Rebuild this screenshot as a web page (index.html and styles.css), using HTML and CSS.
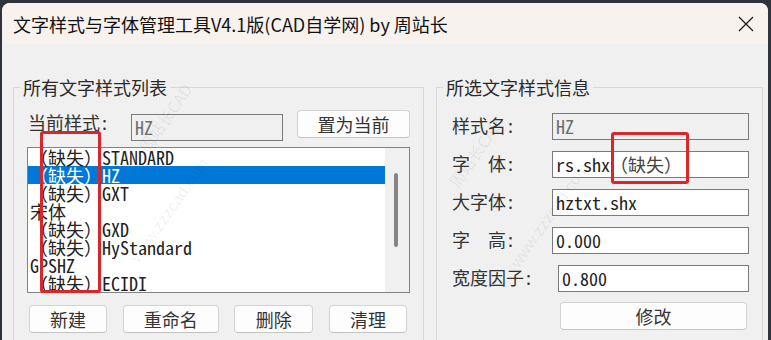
FILE: index.html
```html
<!DOCTYPE html>
<html lang="zh-CN">
<head>
    <meta charset="UTF-8">
    <title>文字样式与字体管理工具</title>
    <link rel="stylesheet" href="styles.css">
</head>
<body>
    <div class="window">
        <div class="titlebar">
            <span class="title">文字样式与字体管理工具V4.1版(CAD自学网) by 周站长</span>
            <svg class="close" width="16" height="16" viewBox="0 0 16 16">
                <path d="M1 1 L15 15 M15 1 L1 15" stroke="#1a1a1a" stroke-width="1.3" fill="none"/>
            </svg>
        </div>

        <div class="content">
            <fieldset class="group group-list">
                <legend>所有文字样式列表</legend>
                <div class="cur-row">
                    <span class="label lbl-cur">当前样式:</span>
                    <div class="field disabled w-cur">HZ</div>
                    <button class="btn btn-set">置为当前</button>
                </div>

                <div class="listbox">
                    <div class="items">
                        <div class="item">（缺失）STANDARD</div>
                        <div class="item selected">（缺失）HZ</div>
                        <div class="item">（缺失）GXT</div>
                        <div class="item">宋体</div>
                        <div class="item">（缺失）GXD</div>
                        <div class="item">（缺失）HyStandard</div>
                        <div class="item">GPSHZ</div>
                        <div class="item">（缺失）ECIDI</div>
                    </div>
                    <div class="scrollbar"><div class="thumb"></div></div>
                </div>

                <div class="btn-row">
                    <button class="btn w-new">新建</button>
                    <button class="btn w-rename">重命名</button>
                    <button class="btn w-del">删除</button>
                    <button class="btn w-clean">清理</button>
                </div>
            </fieldset>

            <fieldset class="group group-info">
                <legend>所选文字样式信息</legend>
                <div class="info-row">
                    <span class="label">样式名:</span>
                    <div class="field disabled">HZ</div>
                </div>
                <div class="info-row">
                    <span class="label">字　体:</span>
                    <div class="field">rs.shx<span class="missing">（缺失）</span></div>
                </div>
                <div class="info-row">
                    <span class="label">大字体:</span>
                    <div class="field">hztxt.shx</div>
                </div>
                <div class="info-row">
                    <span class="label">字　高:</span>
                    <div class="field">0.000</div>
                </div>
                <div class="info-row">
                    <span class="label wide">宽度因子:</span>
                    <div class="field">0.800</div>
                </div>
                <button class="btn btn-modify">修改</button>
            </fieldset>
        </div>

        <!-- watermark -->
        <span class="mark mark1">www.zzzcad.com</span>
        <span class="mark mark2">周站长CAD</span>
        <span class="mark mark3">www.zzzcad.com</span>
        <span class="mark mark4">周站长CAD</span>

        <!-- red annotation boxes -->
        <div class="note note-list"></div>
        <div class="note note-font"></div>
    </div>
</body>
</html>
```

FILE: styles.css
```css
body {
    margin: 0;
    background-color: #2f333c;
    font-family: "Noto Sans Mono CJK SC", "Liberation Mono", "Noto Sans CJK SC", monospace;
    font-size: 18px;
    color: #333;
    overflow: hidden;
}

.window {
    position: relative;
    margin: 3px 3px 0 2px;
    height: 337px;
    background-color: #f0f0f0;
    border-radius: 8px 8px 0 0;
    overflow: hidden;
}

.titlebar {
    height: 41px;
    background-color: #f8f2ee;
    display: flex;
    align-items: center;
    justify-content: space-between;
    padding: 0 14px 0 11px;
}

.title {
    font-family: "Noto Sans CJK SC", sans-serif;
    font-size: 18px;
    color: #111;
    line-height: 24px;
}

.close {
    display: block;
}

.content {
    display: flex;
    gap: 12px;
    padding: 0 5px 0 11px;
    margin-top: 33px;
}

.group {
    margin: 0;
    border: 1px solid #d8d8d8;
    min-width: 0;
    box-sizing: border-box;
    height: 300px;
}

.group legend {
    font-family: "Noto Sans CJK SC", sans-serif;
    font-size: 18px;
    line-height: 20px;
    color: #2a2a2a;
    padding: 0 3px;
}

.group-list {
    width: 411px;
    padding: 0 13px 0 14px;
}

.group-list legend {
    margin-left: -8px;
}

.group-info {
    flex: 1;
    padding: 0 13px 0 15px;
}

.group-info legend {
    margin-left: -9px;
}

.label {
    line-height: 20px;
    white-space: nowrap;
}

.cur-row {
    display: flex;
    align-items: flex-start;
    margin-top: 13px;
    height: 31px;
}

.lbl-cur {
    width: 103px;
    margin-top: 2px;
}

.field {
    box-sizing: border-box;
    height: 27px;
    border: 1px solid #7a7a7a;
    background-color: #fff;
    padding: 0 3px;
    line-height: 25px;
    white-space: nowrap;
    overflow: hidden;
    color: #222;
}

.field.disabled {
    background-color: #f0f0f0;
    color: #6e6e6e;
}

.w-cur {
    width: 152px;
    margin-top: 4px;
}

.btn {
    box-sizing: border-box;
    height: 28px;
    background-color: #fdfdfd;
    border: 1px solid #d3d3d3;
    border-bottom-color: #c4c4c4;
    border-radius: 4px;
    font-family: "Noto Sans CJK SC", sans-serif;
    font-size: 18px;
    color: #333;
    padding: 0;
    line-height: 24px;
}

.btn-set {
    width: 113px;
    margin-left: auto;
}

.listbox {
    display: flex;
    box-sizing: border-box;
    width: 383px;
    height: 146px;
    margin: 6px 0 0 -1px;
    border: 1px solid #828282;
    background-color: #fff;
}

.items {
    flex: 1;
}

.item {
    height: 18px;
    line-height: 18px;
    padding-left: 2px;
    white-space: nowrap;
    color: #222;
}

.item.selected {
    background-color: #0078d7;
    color: #fff;
}

.scrollbar {
    width: 24px;
    background-color: #f0f0f0;
    position: relative;
}

.thumb {
    position: absolute;
    left: 9px;
    top: 25px;
    width: 4px;
    height: 74px;
    border-radius: 2px;
    background-color: #858585;
}

.btn-row {
    display: flex;
    justify-content: space-between;
    margin-top: 12px;
    padding: 0 3px 0 1px;
}

.w-new { width: 78px; }
.w-rename { width: 96px; }
.w-del { width: 79px; }
.w-clean { width: 78px; }

.info-row {
    display: flex;
    align-items: center;
    height: 27px;
    margin-top: 11px;
}

.info-row:first-of-type {
    margin-top: 16px;
}

.info-row .label {
    width: 100px;
    margin-bottom: 4px;
}

.info-row .label.wide {
    width: 106px;
}

.info-row .field {
    flex: 1;
}

.missing {
    color: #444;
}

.btn-modify {
    display: block;
    width: 187px;
    margin: 10px 0 0 108px;
}

.mark {
    position: absolute;
    font-family: "Liberation Sans", sans-serif;
    font-size: 16px;
    color: rgba(0, 0, 0, 0.07);
    transform: rotate(-55deg);
    transform-origin: left bottom;
    white-space: nowrap;
    pointer-events: none;
}

.mark1 { left: 140px; top: 245px; }
.mark2 { left: 150px; top: 130px; font-family: "Noto Sans CJK SC", sans-serif; }
.mark3 { left: 520px; top: 250px; }
.mark4 { left: 460px; top: 165px; font-family: "Noto Sans CJK SC", sans-serif; }

.note {
    position: absolute;
    border: 3px solid #d8262a;
    border-radius: 3px;
    box-sizing: border-box;
}

.note-list {
    left: 38px;
    top: 128px;
    width: 61px;
    height: 162px;
}

.note-font {
    left: 609px;
    top: 129px;
    width: 78px;
    height: 52px;
}
```
